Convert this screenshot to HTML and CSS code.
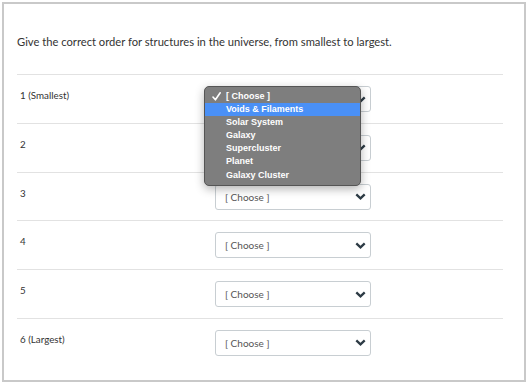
FILE: index.html
```html
<!DOCTYPE html>
<html lang="en">

<head>
    <meta charset="UTF-8">
    <meta name="viewport" content="width=device-width, initial-scale=1.0">
    <title>Matching Question</title>
    <link rel="stylesheet" href="styles.css">
</head>

<body>

    <div class="card">
        <p class="question">Give the correct order for structures in the universe, from smallest to largest.</p>

        <div class="answers">
            <div class="answer-row">
                <div class="answer-label">1 (Smallest)</div>
                <div class="select-wrap">
                    <div class="select">
                        <span>[ Choose ]</span>
                        <svg class="chevron" width="11" height="7" viewBox="0 0 11 7"><path d="M1.3 1.3 L5.5 5.3 L9.7 1.3" fill="none" stroke="#2d3b45" stroke-width="2.3"/></svg>
                    </div>

                    <!-- opened menu of the first select -->
                    <ul class="menu">
                        <li class="menu-item checked">
                            <svg class="check" width="9" height="9" viewBox="0 0 9 9"><path d="M1 5 L3.4 7.8 L8.2 0.8" fill="none" stroke="#fff" stroke-width="1.6" stroke-linecap="round" stroke-linejoin="round"/></svg>[ Choose ]
                        </li>
                        <li class="menu-item active">Voids &amp; Filaments</li>
                        <li class="menu-item">Solar System</li>
                        <li class="menu-item">Galaxy</li>
                        <li class="menu-item">Supercluster</li>
                        <li class="menu-item">Planet</li>
                        <li class="menu-item">Galaxy Cluster</li>
                    </ul>
                </div>
            </div>

            <div class="answer-row">
                <div class="answer-label">2</div>
                <div class="select-wrap">
                    <div class="select">
                        <span>[ Choose ]</span>
                        <svg class="chevron" width="11" height="7" viewBox="0 0 11 7"><path d="M1.3 1.3 L5.5 5.3 L9.7 1.3" fill="none" stroke="#2d3b45" stroke-width="2.3"/></svg>
                    </div>
                </div>
            </div>

            <div class="answer-row">
                <div class="answer-label">3</div>
                <div class="select-wrap">
                    <div class="select">
                        <span>[ Choose ]</span>
                        <svg class="chevron" width="11" height="7" viewBox="0 0 11 7"><path d="M1.3 1.3 L5.5 5.3 L9.7 1.3" fill="none" stroke="#2d3b45" stroke-width="2.3"/></svg>
                    </div>
                </div>
            </div>

            <div class="answer-row">
                <div class="answer-label">4</div>
                <div class="select-wrap">
                    <div class="select">
                        <span>[ Choose ]</span>
                        <svg class="chevron" width="11" height="7" viewBox="0 0 11 7"><path d="M1.3 1.3 L5.5 5.3 L9.7 1.3" fill="none" stroke="#2d3b45" stroke-width="2.3"/></svg>
                    </div>
                </div>
            </div>

            <div class="answer-row">
                <div class="answer-label">5</div>
                <div class="select-wrap">
                    <div class="select">
                        <span>[ Choose ]</span>
                        <svg class="chevron" width="11" height="7" viewBox="0 0 11 7"><path d="M1.3 1.3 L5.5 5.3 L9.7 1.3" fill="none" stroke="#2d3b45" stroke-width="2.3"/></svg>
                    </div>
                </div>
            </div>

            <div class="answer-row">
                <div class="answer-label">6 (Largest)</div>
                <div class="select-wrap">
                    <div class="select">
                        <span>[ Choose ]</span>
                        <svg class="chevron" width="11" height="7" viewBox="0 0 11 7"><path d="M1.3 1.3 L5.5 5.3 L9.7 1.3" fill="none" stroke="#2d3b45" stroke-width="2.3"/></svg>
                    </div>
                </div>
            </div>
        </div>
    </div>

</body>

</html>
```

FILE: styles.css
```css
body {
    font-family: 'Lato', 'Liberation Sans', sans-serif;
    background-color: #fff;
    margin: 0;
    padding: 0;
    color: #2d3b45;
}

.card {
    margin: 2px;
    border: 2px solid #c9c9c9;
    padding: 29px 21px 13px 13px;
    height: 380px;
    box-sizing: border-box;
    width: 524px;
}

.question {
    margin: 0 0 23px 0;
    font-size: 11.2px;
    line-height: 18px;
    color: #333;
}

.answer-row {
    display: flex;
    align-items: flex-start;
    height: 48.8px;
    box-sizing: border-box;
    border-top: 1px solid #e2e2e2;
}

.answer-label {
    width: 198px;
    box-sizing: border-box;
    padding: 13px 0 0 3px;
    font-size: 9.8px;
    line-height: 14px;
    color: #333;
}

.select-wrap {
    position: relative;
    margin-top: 11px;
}

.select {
    display: flex;
    align-items: center;
    justify-content: space-between;
    width: 156px;
    height: 26px;
    box-sizing: border-box;
    padding: 0 4px 0 9px;
    border: 1px solid #c8ced2;
    border-radius: 3px;
    background-color: #fff;
    font-size: 10px;
    color: #555;
}

.chevron {
    display: block;
}

.menu {
    position: absolute;
    left: -11px;
    top: 0;
    width: 157px;
    margin: 0;
    padding: 3px 0 3px 0;
    list-style: none;
    background-color: #7e7e7e;
    border: 1px solid #555;
    border-radius: 5px;
    box-shadow: 0 3px 10px rgba(0, 0, 0, 0.3);
    box-sizing: border-box;
    z-index: 10;
}

.menu-item {
    position: relative;
    height: 13.1px;
    line-height: 13px;
    padding-left: 21px;
    font-family: 'Liberation Sans', Arial, sans-serif;
    font-weight: bold;
    font-size: 9px;
    color: #fff;
}

.menu-item.active {
    background-color: #4a90f6;
}

.check {
    position: absolute;
    left: 7px;
    top: 2px;
}
```
